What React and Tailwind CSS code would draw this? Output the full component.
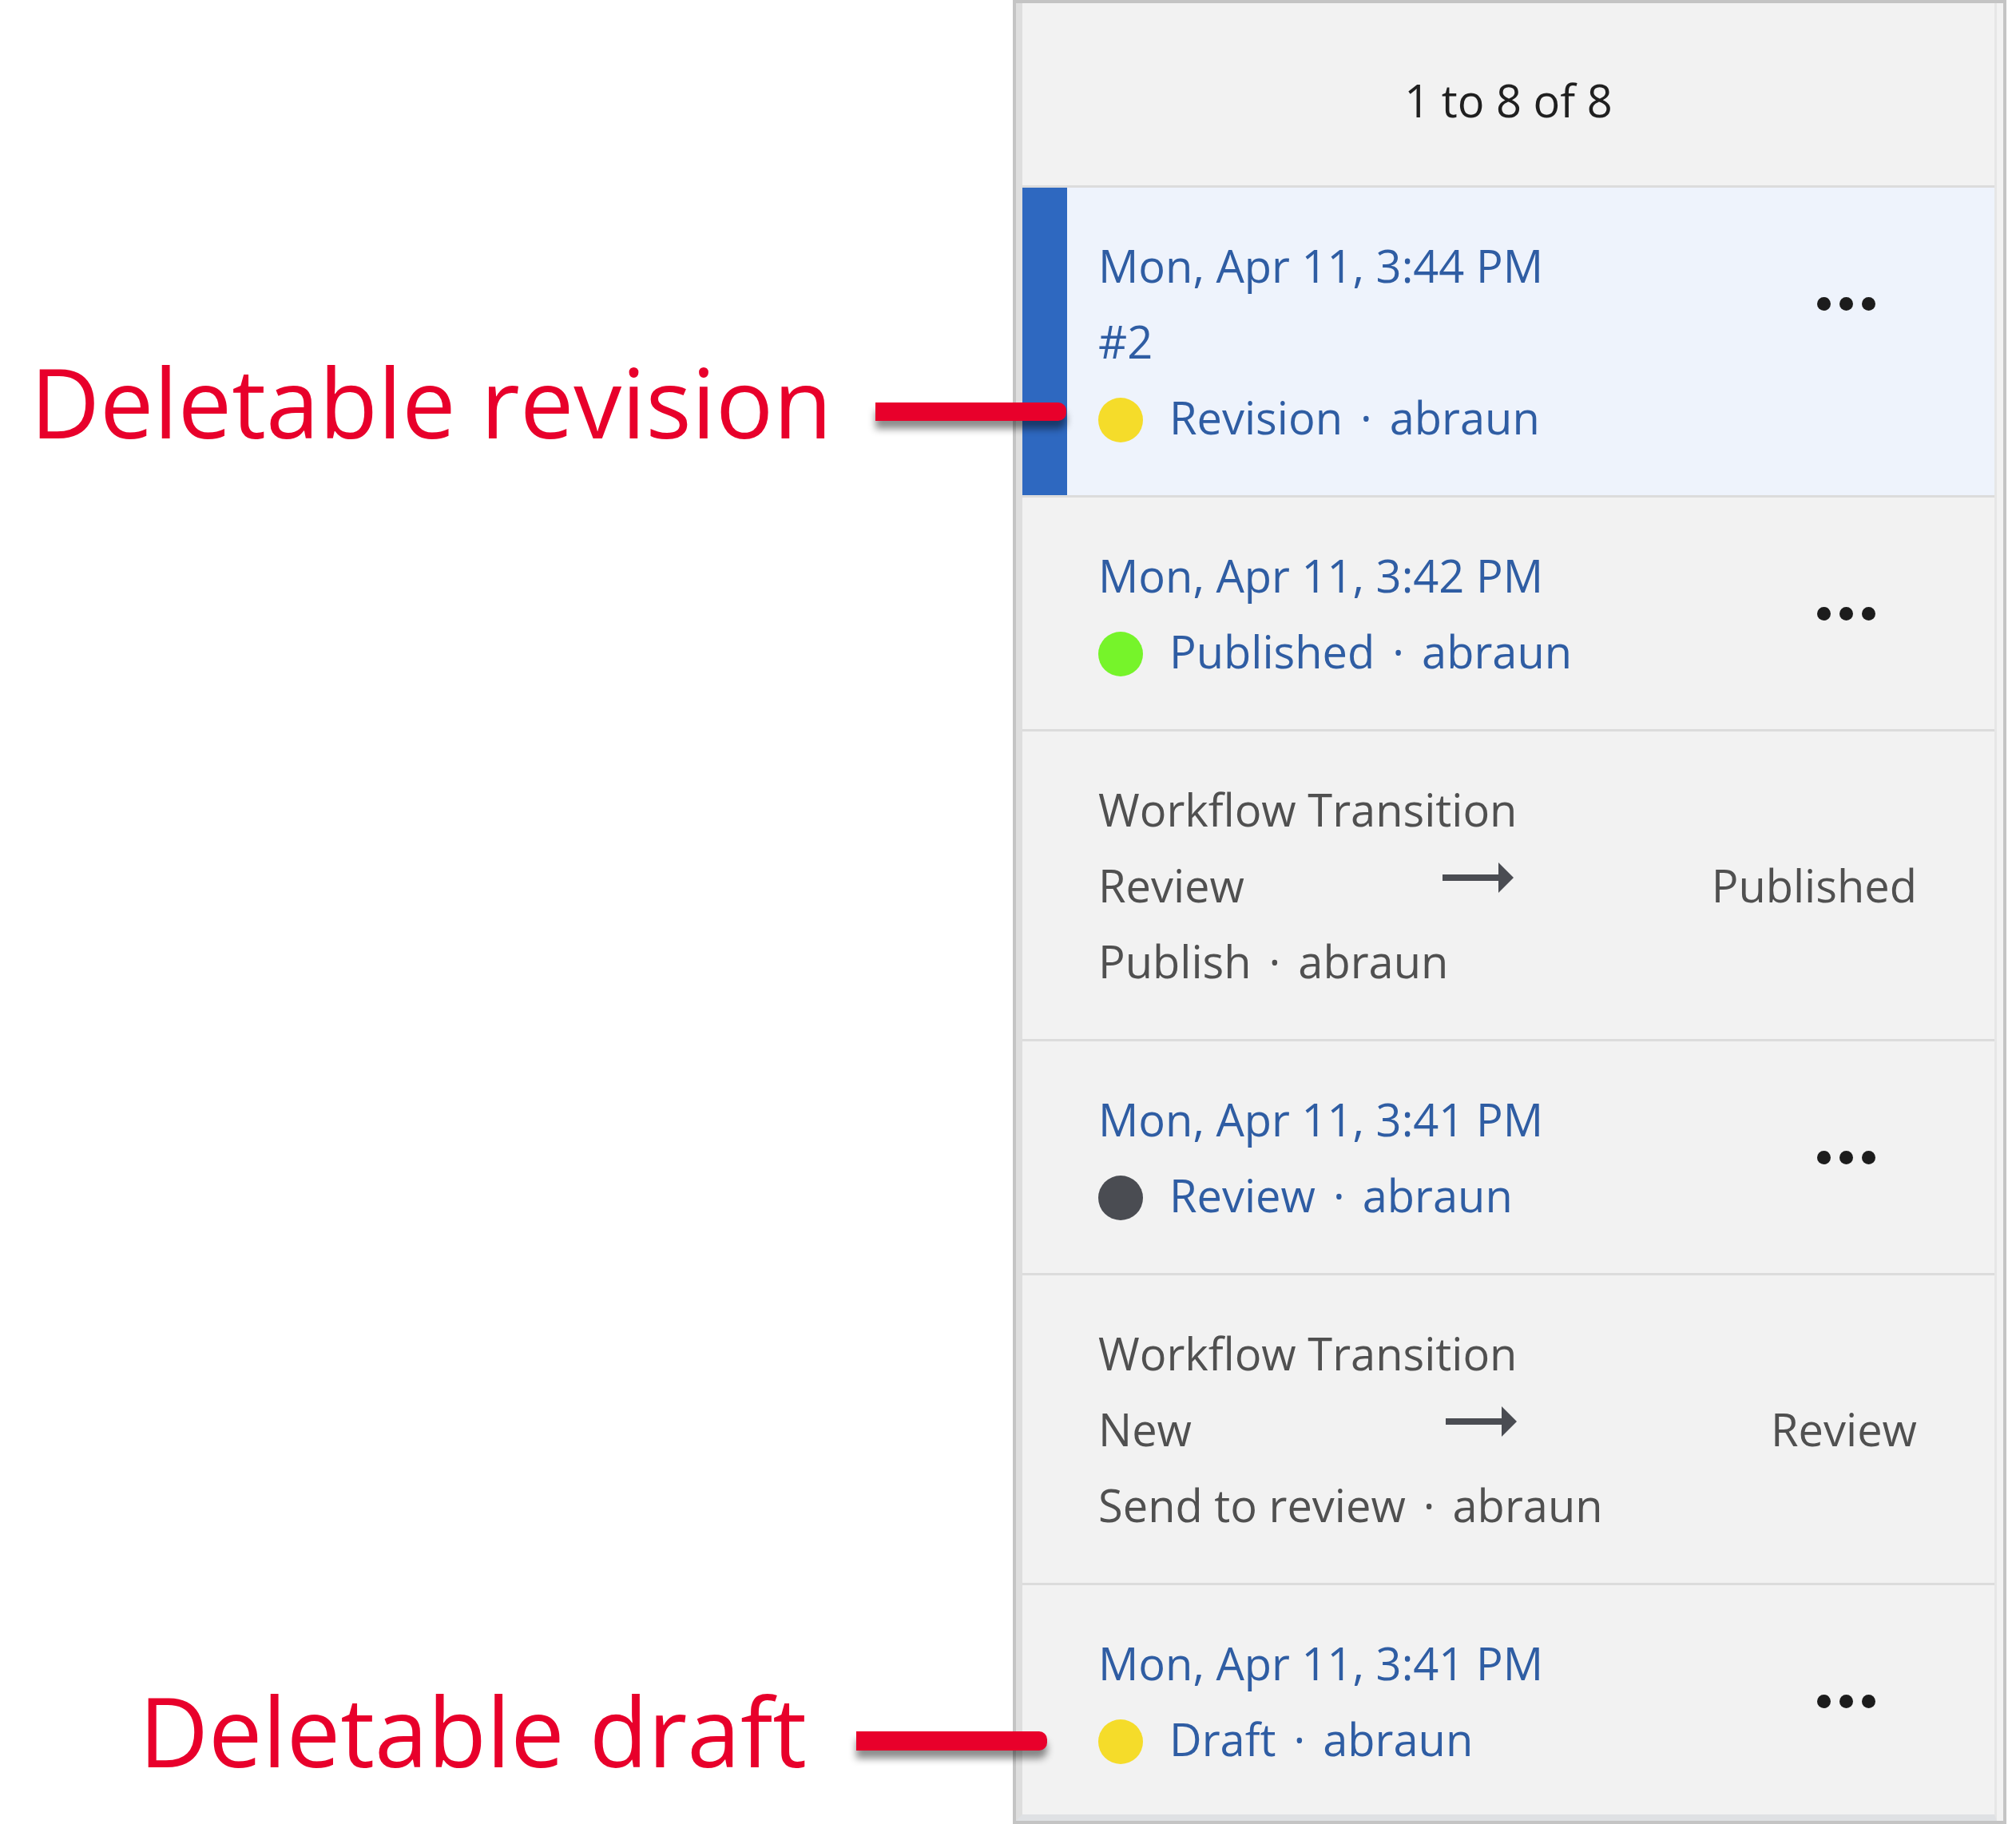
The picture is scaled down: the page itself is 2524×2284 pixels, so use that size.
import React from "react";

const BLUE = "text-[#2f5da3]";

function Dots() {
  return (
    <div className="flex h-[190px] items-center gap-[11px] mr-[52px]">
      <span className="block w-[17px] h-[17px] rounded-full bg-[#1c1c1c]" />
      <span className="block w-[17px] h-[17px] rounded-full bg-[#1c1c1c]" />
      <span className="block w-[17px] h-[17px] rounded-full bg-[#1c1c1c]" />
    </div>
  );
}

function Sep() {
  return <span className="mx-[22px]">·</span>;
}

function Status({ color, label }) {
  return (
    <div className="flex items-center">
      <span className={"block w-[56px] h-[56px] rounded-full mt-[6px] shrink-0 " + color} />
      <span className="ml-[33px]">
        {label}
        <Sep />
        abraun
      </span>
    </div>
  );
}

function RevisionRow({ date, extra, color, label, selected }) {
  return (
    <div
      className={
        "flex shrink-0 border-b-[3px] border-[#dcdcdc] " +
        (selected ? "bg-[#eef3fc]" : "")
      }
    >
      {selected ? <div className="w-[56px] shrink-0 bg-[#2e68c0]" /> : null}
      <div
        className={
          "flex flex-1 justify-between py-[50px] pr-[97px] " +
          (selected ? "pl-[39px]" : "pl-[95px]")
        }
      >
        <div className={"flex flex-col " + BLUE}>
          <div>{date}</div>
          {extra ? <div>{extra}</div> : null}
          <Status color={color} label={label} />
        </div>
        <Dots />
      </div>
    </div>
  );
}

function Arrow() {
  return (
    <svg width="89" height="38" viewBox="0 0 89 38" className="mb-[20px] shrink-0">
      <rect x="0" y="15" width="74" height="8" fill="#4a4c52" />
      <polygon points="70,0 89,19 70,38" fill="#4a4c52" />
    </svg>
  );
}

function TransitionRow({ from, to, action }) {
  return (
    <div className="flex shrink-0 flex-col border-b-[3px] border-[#dcdcdc] py-[50px] pl-[95px] pr-[97px] text-[#505050]">
      <div>Workflow Transition</div>
      <div className="flex items-center justify-between">
        <span>{from}</span>
        <Arrow />
        <span>{to}</span>
      </div>
      <div>
        {action}
        <Sep />
        abraun
      </div>
    </div>
  );
}

export default function App() {
  return (
    <div className="relative flex w-[2524px] h-[2284px] overflow-hidden bg-white font-['Open_Sans',sans-serif]">
      <div className="w-[1268px] shrink-0" />
      <div className="flex w-[1244px] h-full shrink-0 border-[4px] border-[#c4c4c4] bg-[#f2f2f2]">
        <div className="flex flex-1 flex-col overflow-hidden border-l-[8px] border-l-[#dedede] border-r-[3px] border-r-[#e6e6e6] border-b-[8px] border-b-[#dfe1e4] mr-[8px] text-[56px] leading-[95px]">
          <div className="shrink-0 border-b-[3px] border-[#dcdcdc] pt-[74px] pb-[59px] leading-[95px] text-center text-[#1f1f1f]">
            1 to 8 of 8
          </div>
          <RevisionRow
            selected
            date="Mon, Apr 11, 3:44 PM"
            extra="#2"
            color="bg-[#f5dc2a]"
            label="Revision"
          />
          <RevisionRow
            date="Mon, Apr 11, 3:42 PM"
            color="bg-[#76f42a]"
            label="Published"
          />
          <TransitionRow from="Review" to="Published" action="Publish" />
          <RevisionRow
            date="Mon, Apr 11, 3:41 PM"
            color="bg-[#4a4c52]"
            label="Review"
          />
          <TransitionRow from="New" to="Review" action="Send to review" />
          <RevisionRow
            date="Mon, Apr 11, 3:41 PM"
            color="bg-[#f5dc2a]"
            label="Draft"
          />
        </div>
      </div>

      <div className="absolute left-[38px] top-[443px] text-[120px] leading-none text-[#e8002b] whitespace-nowrap">
        Deletable revision
      </div>
      <div className="absolute left-[1096px] top-[504px] w-[239px] h-[23px] rounded-r-[10px] bg-[#e8002b] shadow-[0_10px_10px_rgba(0,0,0,0.45)]" />

      <div className="absolute left-[174px] top-[2107px] text-[120px] leading-none text-[#e8002b] whitespace-nowrap">
        Deletable draft
      </div>
      <div className="absolute left-[1072px] top-[2168px] w-[239px] h-[24px] rounded-r-[10px] bg-[#e8002b] shadow-[0_10px_10px_rgba(0,0,0,0.45)]" />
    </div>
  );
}
